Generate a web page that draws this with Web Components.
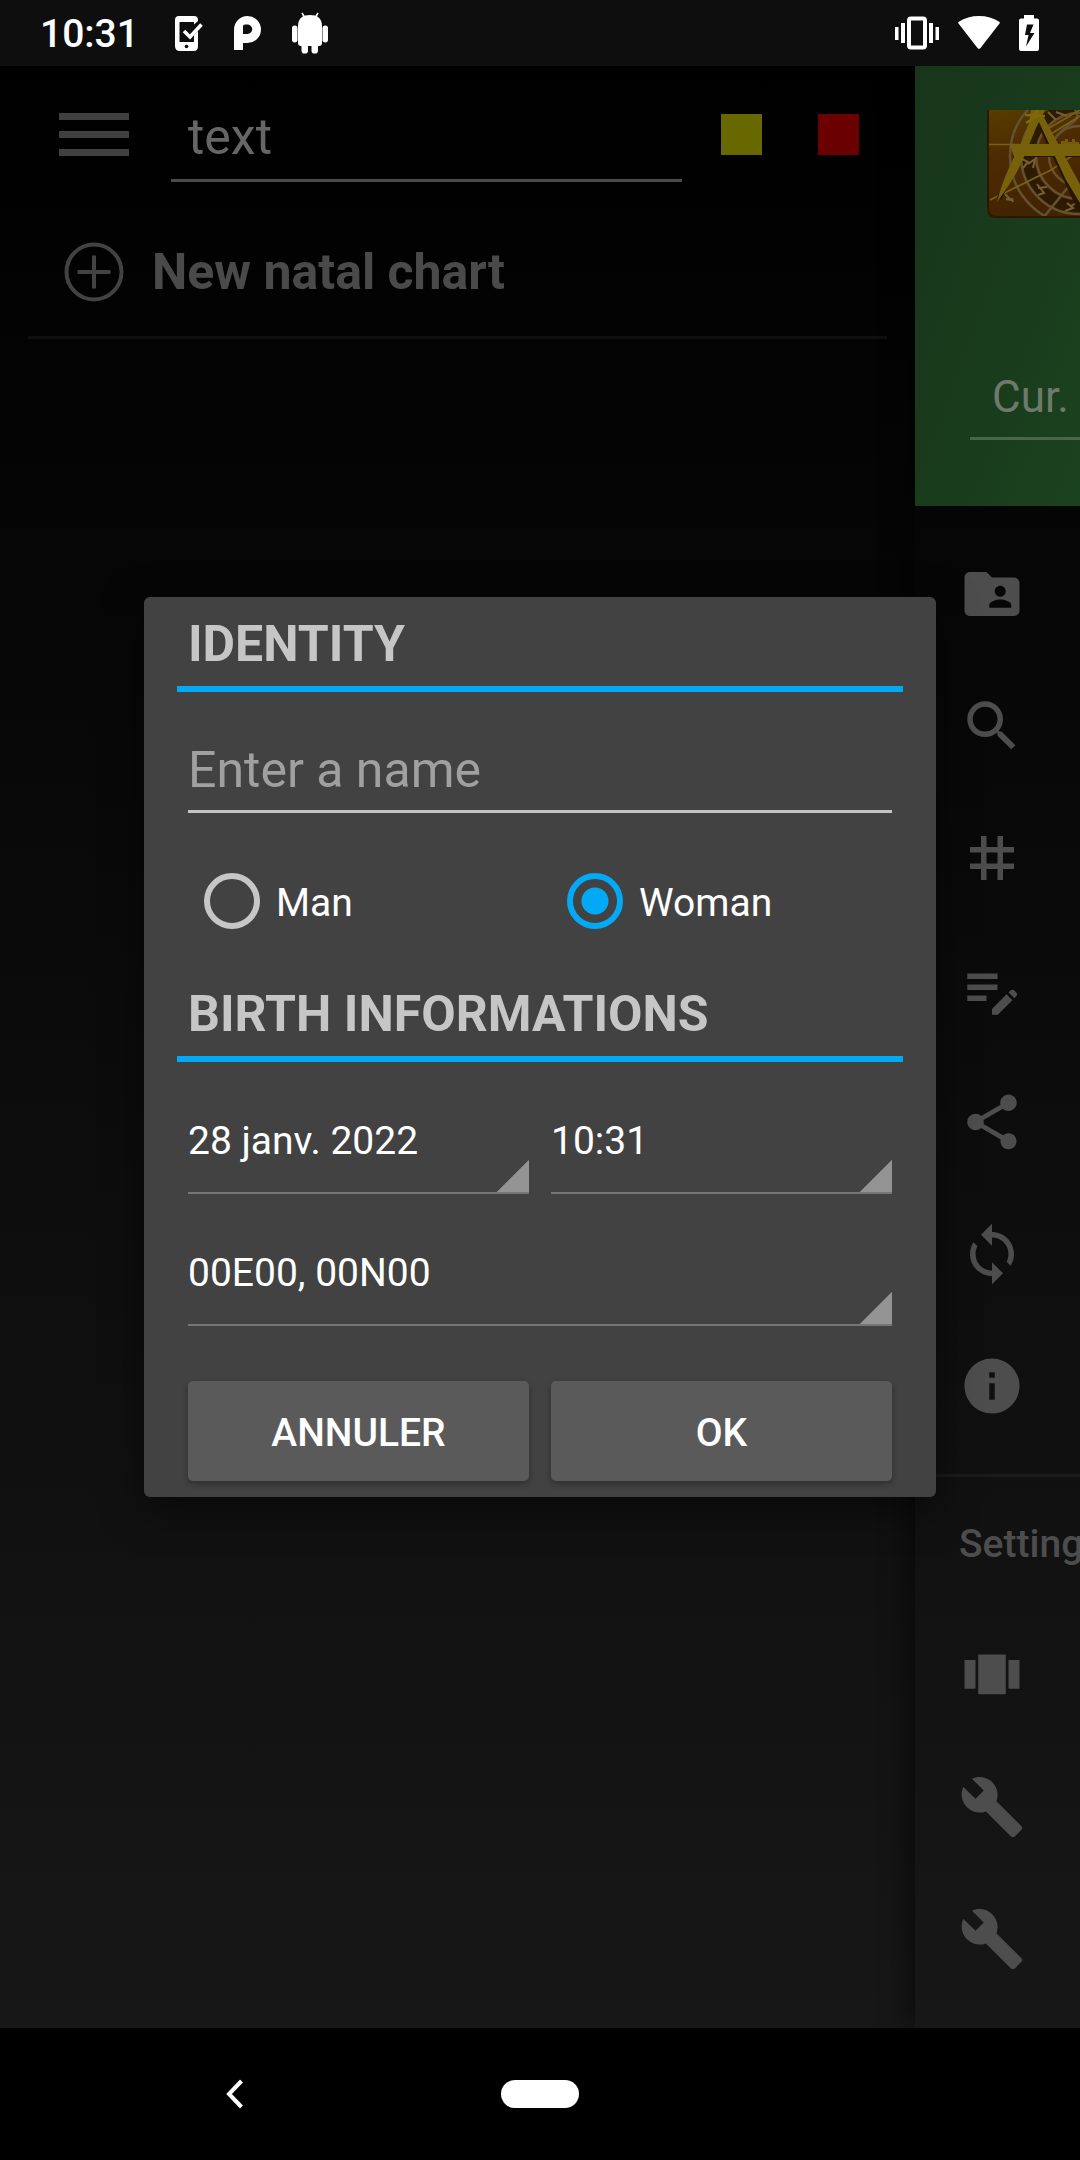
<!DOCTYPE html>
<html lang="en">
<head>
<meta charset="utf-8">
<meta name="viewport" content="width=device-width, initial-scale=1">
<title>Natal charts</title>
<style>
  html, body { margin: 0; min-height: 100%; background: #000; }
  body { font-family: Roboto, "Liberation Sans", sans-serif; font-size: 39px; color: #fff; }
</style>
</head>
<body>
<app-screen></app-screen>

<script>
const BASE = `
  *, *::before, *::after { box-sizing: border-box; }
  button, input, select { font: inherit; color: inherit; margin: 0; padding: 0; border: 0; border-radius: 0; background: none; appearance: none; outline: none; }
  svg { display: block; }
`;

function define(name, css, html) {
  const template = document.createElement('template');
  customElements.define(name, class extends HTMLElement {
    constructor() {
      super();
      template.innerHTML = `<style>${BASE}${css}</style>${typeof html === 'function' ? html(this) : html}`;
      this.attachShadow({ mode: 'open' }).append(template.content.cloneNode(true));
    }
  });
}

/* 24-unit icons of the side drawer */
const ICONS = {
  folder: 'M20 6h-8l-2-2H4c-1.1 0-1.99.9-1.99 2L2 18c0 1.1.9 2 2 2h16c1.1 0 2-.9 2-2V8c0-1.1-.9-2-2-2zm-5 3c1.1 0 2 .9 2 2s-.9 2-2 2-2-.9-2-2 .9-2 2-2zm4 8h-8v-1c0-1.33 2.67-2 4-2s4 .67 4 2v1z',
  search: 'M15.5 14h-.79l-.28-.27C15.41 12.59 16 11.11 16 9.5 16 5.91 13.09 3 9.5 3S3 5.91 3 9.5 5.91 16 9.5 16c1.61 0 3.09-.59 4.23-1.57l.27.28v.79l5 4.99L20.49 19l-4.99-5zm-6 0C7.01 14 5 11.99 5 9.5S7.01 5 9.5 5 14 7.01 14 9.5 11.99 14 9.5 14z',
  hash: 'M20 10V8h-4V4h-2v4h-4V4H8v4H4v2h4v4H4v2h4v4h2v-4h4v4h2v-4h4v-2h-4v-4h4zm-6 4h-4v-4h4v4z',
  note: 'M3 10h11v2H3v-2zm0-2h11V6H3v2zm0 8h7v-2H3v2zm15.01-3.13.71-.71c.39-.39 1.02-.39 1.41 0l.71.71c.39.39.39 1.02 0 1.41l-.71.71-2.12-2.12zm-.71.71-5.3 5.3V21h2.12l5.3-5.3-2.12-2.12z',
  share: 'M18 16.08c-.76 0-1.44.3-1.96.77L8.91 12.7c.05-.23.09-.46.09-.7s-.04-.47-.09-.7l7.05-4.11c.54.5 1.25.81 2.04.81 1.66 0 3-1.34 3-3s-1.34-3-3-3-3 1.34-3 3c0 .24.04.47.09.7L8.04 9.81C7.5 9.31 6.79 9 6 9c-1.66 0-3 1.34-3 3s1.34 3 3 3c.79 0 1.5-.31 2.04-.81l7.12 4.16c-.05.21-.08.43-.08.65 0 1.61 1.31 2.92 2.92 2.92s2.92-1.31 2.92-2.92-1.31-2.92-2.92-2.92z',
  sync: 'M12 4V1L8 5l4 4V6c3.31 0 6 2.69 6 6 0 1.01-.25 1.97-.7 2.8l1.46 1.46C19.54 15.03 20 13.57 20 12c0-4.42-3.58-8-8-8zm0 14c-3.31 0-6-2.69-6-6 0-1.01.25-1.97.7-2.8L5.24 7.74C4.46 8.97 4 10.43 4 12c0 4.42 3.58 8 8 8v3l4-4-4-4v3z',
  info: 'M12 2C6.48 2 2 6.48 2 12s4.48 10 10 10 10-4.48 10-10S17.52 2 12 2zm1 15h-2v-6h2v6zm0-8h-2V7h2v2z',
  carousel: 'M7 19h10V4.500H7V19zm-5-2h4V6.500H2V17zM18 6.500V17h4V6.500h-4z',
  build: 'M22.7 19l-9.1-9.1c.9-2.3.4-5-1.5-6.9-2-2-5-2.4-7.4-1.3L9 6 6 9 1.600 4.700C.4 7.100.9 10.100 2.900 12.100c1.900 1.900 4.600 2.400 6.900 1.500l9.100 9.100c.4.4 1 .4 1.400 0l2.300-2.300c.5-.4.5-1.100.1-1.400z'
};

define('drawer-item', `
  :host { display: block; height: 132px; }
  button { display: flex; align-items: center; width: 100%; height: 100%; padding-left: 44px; }
  svg { width: 66px; height: 66px; fill: #4d4d4d; }
`, host => `<button type="button" aria-label="${host.getAttribute('label')}"><svg viewBox="0 0 24 24" aria-hidden="true"><path d="${ICONS[host.getAttribute('icon')]}"/></svg></button>`);

define('status-bar', `
  :host { display: flex; justify-content: space-between; align-items: flex-start; height: 66px; padding: 0 41px 0 40px; background: #0e0e0e; }
  div { display: flex; align-items: center; height: 66px; }
  time { font-weight: 500; line-height: 46px; padding-top: 2px; }
  svg { fill: #fff; }
  .left { gap: 31px; }
  .left time { margin-right: 5px; }
  .right { gap: 19px; }
`, `
  <div class="left">
    <time>10:31</time>
    <svg width="28" height="40" viewBox="0 0 28 40"><path d="M4 3h15q4 0 4 4v1l-4 3.500V9H4.500v20H19v-7l4-4v15q0 5-4 5H5q-5 0-5-5V7q0-4 4-4z"/><circle cx="11.500" cy="33.500" r="1.800" fill="#0e0e0e"/><path d="M9 18l6 6L26.500 11.500" fill="none" stroke="#fff" stroke-width="3.600"/></svg>
    <svg width="27" height="36" viewBox="0 0 27 36"><path fill-rule="evenodd" d="M0 35V14.500A13.500 13.500 0 1 1 13.500 28H9v7zM13.500 9.500H11q-2 0-2 2V19h4.500a4.750 4.750 0 0 0 0-9.500z"/></svg>
    <svg width="36" height="42" viewBox="0 0 36 42"><path d="M6 14C6 6 11 3 18 3s12 3 12 11z"/><path d="M10 1l3 5M26 1l-3 5" stroke="#fff" stroke-width="1.500"/><path d="M6 14h24v17q0 3-3 3H9q-3 0-3-3z"/><rect x="0" y="13.500" width="5.500" height="17" rx="2.700"/><rect x="30.500" y="13.500" width="5.500" height="17" rx="2.700"/><rect x="9.500" y="30" width="6.500" height="11.500" rx="2.800"/><rect x="19.500" y="30" width="6.500" height="11.500" rx="2.800"/></svg>
  </div>
  <div class="right">
    <svg width="44" height="34" viewBox="0 0 44 34"><rect x="14" y="2.500" width="16" height="29" rx="2" fill="none" stroke="#fff" stroke-width="4"/><path d="M0 11h3.500v13H0zM6 7h4v20H6zM34 7h4v20h-4zM40.500 11H44v13h-3.500z"/></svg>
    <svg width="42" height="36" viewBox="0 0 42 36"><path d="M.5 8.500Q-.3 7.500.8 6.700 9.500 1 21 1t20.200 5.700q1.100.8.3 1.800L22.500 33q-1.500 1.700-3 0z"/></svg>
    <svg width="20" height="36" viewBox="0 0 20 36"><path fill-rule="evenodd" d="M5 0h10v3.500h3q2 0 2 2V34q0 2-2 2H2q-2 0-2-2V5.500q0-2 2-2h3zM8 9.500L6 20h3.500L7 31.500 15.500 18H11l3.500-8.500z"/></svg>
  </div>
`);

define('chart-list', `
  :host { display: block; min-width: 0; flex: 1; }
  header { display: flex; align-items: flex-start; padding: 41px 56px 0 59px; }
  header button { height: 55px; display: flex; align-items: center; flex: none; }
  .menu { margin-right: 42px; }
  input { flex: 1; min-width: 0; height: 75px; padding: 0 17px 12px; border-bottom: 3px solid #4b4b4b; font-size: 50px; color: #666; }
  .swatch { margin-left: 39px; }
  .swatch + .swatch { margin-left: 56px; }
  .swatch i { display: block; width: 41px; height: 41px; background: var(--c); }
  .new { display: flex; align-items: center; gap: 28px; width: calc(100% - 56px); height: 133px; margin: 24px 28px 0; padding: 2px 0 0 36px; border-bottom: 3px solid #0f0f0f; font-size: 50px; font-weight: 700; color: #4a4a4a; }
`, `
  <header>
    <button class="menu" type="button" aria-label="Menu"><svg width="70" height="44" viewBox="0 0 70 44"><path fill="#404040" d="M0 0h70v7H0zM0 18h70v7H0zM0 36h70v7H0z"/></svg></button>
    <input type="text" value="text" aria-label="Search text">
    <button class="swatch" type="button" aria-label="Yellow"><i style="--c:#686800"></i></button>
    <button class="swatch" type="button" aria-label="Red"><i style="--c:#6a0000"></i></button>
  </header>
  <button class="new" type="button"><svg width="60" height="60" viewBox="0 0 60 60" fill="none" stroke="#424242"><circle cx="30" cy="30" r="27.500" stroke-width="4"/><path d="M30 13.500v33M13.500 30h33" stroke-width="4"/></svg>New natal chart</button>
`);

define('side-drawer', `
  :host { display: block; flex: 0 0 165px; min-width: 0; clip-path: inset(0 0 0 -40px); box-shadow: -4px 0 28px rgba(0,0,0,.6); }
  .head { height: 440px; padding: 44px 0 0 72px; background: linear-gradient(110deg, #17351a, #1b421e); overflow: hidden; }
  .head svg { width: 108px; height: 108px; }
  select { display: block; width: 400px; height: 73px; margin: 149px 0 0 -17px; padding: 0 0 11px 22px; border-bottom: 3px solid #486649; font-size: 44px; color: #6e7a6c; }
  nav { padding: 22px 0; }
  h2 { margin: 0; padding-left: 44px; border-top: 3px solid #1b1b1b; height: 135px; font-size: 39px; line-height: 134px; font-weight: 500; color: #4d4d4d; }
`, `
  <div class="head">
    <svg viewBox="0 0 108 108" aria-hidden="true">
      <defs>
        <clipPath id="tile"><path d="M0 0H108V108H9Q0 108 0 99z"/></clipPath>
        <linearGradient id="wood" x2=".3" y2="1"><stop stop-color="#563e00"/><stop offset=".4" stop-color="#4e2c02"/><stop offset="1" stop-color="#422302"/></linearGradient>
      </defs>
      <g clip-path="url(#tile)" fill="none">
        <path fill="url(#wood)" d="M0 0h108v108H0z"/>
        <g stroke="#2e1a00" stroke-width="13"><circle cx="90" cy="48" r="49"/></g>
        <g stroke="#665033" stroke-width="2.500">
          <circle cx="92" cy="46" r="69"/><circle cx="92" cy="46" r="58"/><circle cx="92" cy="46" r="43"/><circle cx="92" cy="46" r="30"/>
          <path d="M82 76L56 108M88 0q6 8-3 13T67 30"/>
        </g>
        <path d="M35 49l6 3-5 6M41 54l7-5-2 9M50 74l7 9-6 2M51 78l9-1M80 93l6 5-8 3M84 96l5-3M18 84l6 6-5-1M25 88l1 4M61 2l8 8M69 2l11 4" stroke="#755f30" stroke-width="2"/>
        <path d="M0 34.500h32M3 90L64 60 94 40M57 21L93 0M59 27L98 3" stroke="#796112" stroke-width="1.700"/>
        <path d="M74 34v-3h4v-2h3v3h4v-3h3v3h4v5" fill="#765a0d"/>
        <g transform="translate(2 3)" stroke="#271600"><path stroke-width="5" d="M48 5L10 86"/><path stroke-width="8" d="M50 5L93 97M24 40h84"/></g>
        <path fill="#77610b" d="M44 0h14l-9 18-12 29Q29 67 10 92q4-18 17-45l-4-12h10Q43 18 44 0zM53 0L96 80v18L79 70 51 10zM23 34h85v12H27z"/>
        <path d="M38 5l20 1M42 12l9-12M39 13l14-9" stroke="#81690b" stroke-width="2.500"/>
        <path stroke="#2a1900" stroke-width="2" d="M1 0v98q0 9 9 9h98"/>
      </g>
    </svg>
    <select aria-label="Current chart"><option>Cur.</option></select>
  </div>
  <nav>
    <drawer-item icon="folder" label="Contacts folder"></drawer-item>
    <drawer-item icon="search" label="Search"></drawer-item>
    <drawer-item icon="hash" label="Grid"></drawer-item>
    <drawer-item icon="note" label="Edit notes"></drawer-item>
    <drawer-item icon="share" label="Share"></drawer-item>
    <drawer-item icon="sync" label="Synchronise"></drawer-item>
    <drawer-item icon="info" label="Information"></drawer-item>
  </nav>
  <h2>Settings</h2>
  <drawer-item icon="carousel" label="Views"></drawer-item>
  <drawer-item icon="build" label="Tools"></drawer-item>
  <drawer-item icon="build" label="Options"></drawer-item>
`);

define('section-title', `
  :host { display: block; padding: 17px 11px 12px; border-bottom: 6px solid #03a9f4; }
  h2 { margin: 0; font-size: 50px; line-height: 60px; font-weight: 700; color: #c6c6c6; }
`, `<h2><slot></slot></h2>`);

define('spinner-field', `
  :host { display: block; }
  select { display: block; width: 100%; height: 79px; padding: 0 33px 26px 0; border-bottom: 2px solid #757575;
    background: linear-gradient(to bottom right, transparent 50%, #949494 calc(50% + 1px)) right bottom / 33px 33px no-repeat; }
`, host => `<select aria-label="${host.getAttribute('label')}"><option>${host.getAttribute('value')}</option></select>`);

define('sex-choice', `
  :host { display: grid; grid-template-columns: 1fr 1fr; height: 88px; }
  label { display: flex; align-items: center; gap: 16px; padding-left: 27px; }
  span { padding-top: 3px; }
  input { width: 56px; height: 56px; border: 6px solid #c6c6c6; border-radius: 50%; }
  input:checked { border-color: #03a9f4; background: radial-gradient(circle, #03a9f4 13px, transparent 14px); }
`, `
  <label><input type="radio" name="sex" value="man"><span>Man</span></label>
  <label><input type="radio" name="sex" value="woman" checked><span>Woman</span></label>
`);

define('raised-button', `
  :host { display: block; }
  button { width: 100%; height: 100px; padding-top: 3px; border-radius: 5px; background: #5a5a5b; font-weight: 500; box-shadow: 0 3px 6px rgba(0,0,0,.3); }
`, `<button type="button"><slot></slot></button>`);

define('chart-dialog', `
  :host { display: block; width: calc(100% - 288px); padding: 0 33px 16px; border-radius: 6px; background: #424242; box-shadow: 0 12px 40px rgba(0,0,0,.5); }
  .name { display: block; width: calc(100% - 22px); height: 73px; margin: 48px 11px 44px; padding-bottom: 10px; border-bottom: 3px solid #c4c4c4; font-size: 50px; }
  .name::placeholder { color: #a0a0a0; opacity: 1; }
  .birth { margin-top: 22px; }
  .fields { display: grid; grid-template-columns: 1fr 1fr; gap: 53px 22px; margin: 53px 11px 55px; }
  .wide { grid-column: 1 / -1; }
  .actions { display: grid; grid-template-columns: 1fr 1fr; gap: 22px; margin: 0 11px; }
`, `
  <section-title>IDENTITY</section-title>
  <input class="name" type="text" placeholder="Enter a name" aria-label="Name">
  <sex-choice></sex-choice>
  <section-title class="birth">BIRTH INFORMATIONS</section-title>
  <div class="fields">
    <spinner-field label="Date" value="28 janv. 2022"></spinner-field>
    <spinner-field label="Time" value="10:31"></spinner-field>
    <spinner-field class="wide" label="Place" value="00E00, 00N00"></spinner-field>
  </div>
  <div class="actions">
    <raised-button>ANNULER</raised-button>
    <raised-button>OK</raised-button>
  </div>
`);

define('nav-bar', `
  :host { display: grid; grid-template-columns: 1fr auto 1fr; align-items: center; height: 132px; background: #000; }
  .back { justify-self: center; padding-right: 32px; }
  .home { width: 78px; height: 28px; border-radius: 14px; background: #fff; }
`, `
  <button class="back" type="button" aria-label="Back"><svg width="18" height="30" viewBox="0 0 18 30"><path d="M15.500 2L3 15l12.500 13" fill="none" stroke="#fff" stroke-width="4"/></svg></button>
  <button class="home" type="button" aria-label="Home"></button>
`);

define('app-screen', `
  :host { display: flex; flex-direction: column; min-height: 100vh; overflow: hidden; }
  main { position: relative; display: flex; flex: 1; background: linear-gradient(#000, #171717); }
  .overlay { position: absolute; inset: 0; display: grid; place-items: center; }
`, `
  <status-bar></status-bar>
  <main>
    <chart-list></chart-list>
    <side-drawer></side-drawer>
    <div class="overlay"><chart-dialog></chart-dialog></div>
  </main>
  <nav-bar></nav-bar>
`);
</script>
</body>
</html>
